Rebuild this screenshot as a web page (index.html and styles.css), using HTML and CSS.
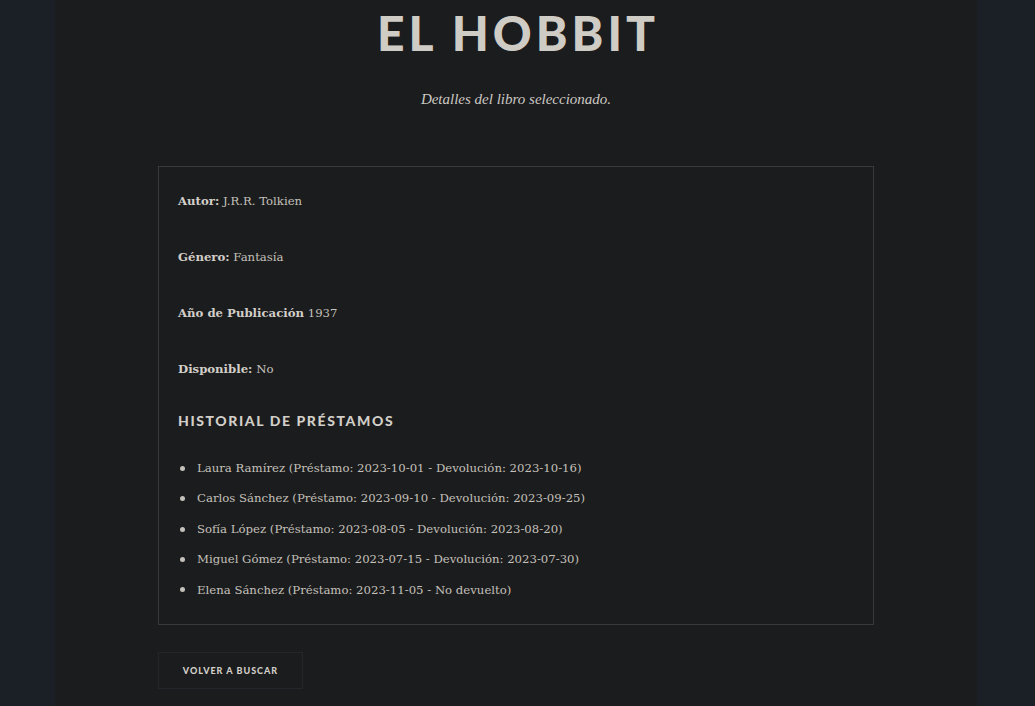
FILE: index.html
```html
<!DOCTYPE html>
<html lang="es">
<head>
<meta charset="utf-8">
<title>El Hobbit</title>
<link rel="stylesheet" href="styles.css">
</head>
<body>
<main class="panel">
  <header class="head">
    <h1 class="title">El Hobbit</h1>
    <p class="subtitle">Detalles del libro seleccionado.</p>
  </header>
  <section class="box">
    <p class="field"><strong>Autor:</strong> J.R.R. Tolkien</p>
    <p class="field"><strong>Género:</strong> Fantasía</p>
    <p class="field"><strong>Año de Publicación</strong> 1937</p>
    <p class="field"><strong>Disponible:</strong> No</p>
    <h2 class="section-title">Historial de Préstamos</h2>
    <ul class="loans">
      <li>Laura Ramírez (Préstamo: 2023-10-01 - Devolución: 2023-10-16)</li>
      <li>Carlos Sánchez (Préstamo: 2023-09-10 - Devolución: 2023-09-25)</li>
      <li>Sofía López (Préstamo: 2023-08-05 - Devolución: 2023-08-20)</li>
      <li>Miguel Gómez (Préstamo: 2023-07-15 - Devolución: 2023-07-30)</li>
      <li>Elena Sánchez (Préstamo: 2023-11-05 - No devuelto)</li>
    </ul>
  </section>
  <a class="button" href="#">Volver a buscar</a>
</main>
</body>
</html>
```
FILE: styles.css
```css
html, body {
  margin: 0;
  padding: 0;
  background: #1b1f26;
  height: 100%;
  overflow: hidden;
}

.panel {
  width: 922px;
  min-height: 706px;
  margin: 0 58px 0 55px;
  background: #1b1c1e;
  padding: 9px 103px 0;
  box-sizing: border-box;
  display: flex;
  flex-direction: column;
  align-items: stretch;
}

.head {
  text-align: center;
}

.title {
  margin: 0;
  font-family: "Lato", "Liberation Sans", sans-serif;
  font-weight: 900;
  font-size: 48px;
  line-height: 48px;
  letter-spacing: 4px;
  text-indent: 4px;
  text-transform: uppercase;
  color: #cfcbc5;
}

.subtitle {
  margin: 32px 0 0;
  font-family: "Liberation Serif", serif;
  font-style: italic;
  font-size: 15px;
  line-height: 20px;
  color: #cdc9c3;
}

.box {
  margin-top: 57px;
  border: 1px solid #3a3a3b;
  padding: 24px 19px 19px;
}

.field {
  margin: 0 0 35px;
  font-family: "DejaVu Serif", serif;
  font-size: 11.7px;
  line-height: 21px;
  color: #c4c0ba;
}

.field strong {
  color: #d2cec8;
  font-weight: 700;
}

.section-title {
  margin: 0;
  font-family: "Lato", "Liberation Sans", sans-serif;
  font-weight: 900;
  font-size: 14px;
  line-height: 12px;
  letter-spacing: 1.6px;
  text-transform: uppercase;
  color: #d2cec8;
}

.loans {
  list-style: none;
  margin: 26px 0 0;
  padding: 0;
}

.loans li {
  display: flex;
  align-items: center;
  font-family: "DejaVu Serif", serif;
  font-size: 11.7px;
  line-height: 30.4px;
  color: #c4c0ba;
}

.loans li::before {
  content: "";
  width: 5px;
  height: 5px;
  border-radius: 50%;
  background: #c4c0ba;
  margin: 0 12px 0 2px;
  flex: none;
}

.button {
  align-self: flex-start;
  margin-top: 27px;
  width: 145px;
  height: 37px;
  box-sizing: border-box;
  border: 1px solid #23272c;
  display: flex;
  align-items: center;
  justify-content: center;
  font-family: "Lato", "Liberation Sans", sans-serif;
  font-weight: 900;
  font-size: 9px;
  letter-spacing: 1px;
  text-transform: uppercase;
  text-decoration: none;
  color: #d2cec8;
}
```
